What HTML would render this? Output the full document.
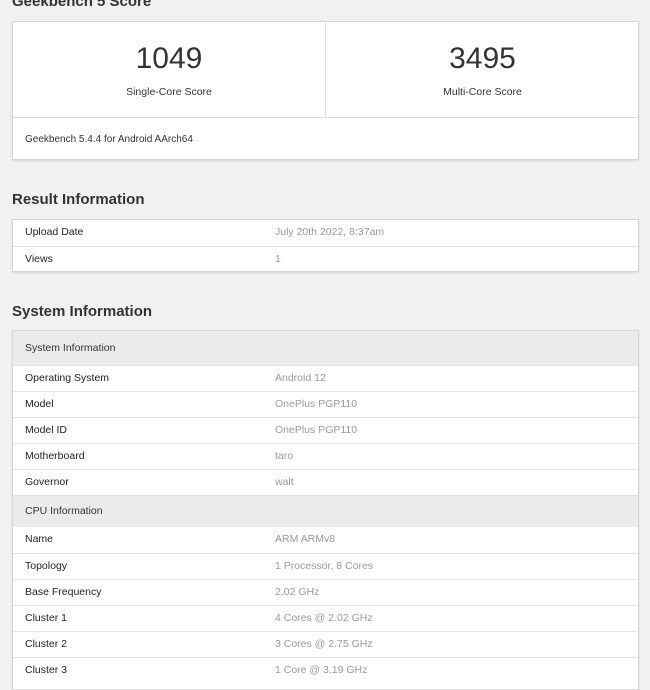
<!DOCTYPE html>
<html><head><meta charset="utf-8"><style>
*{margin:0;padding:0;box-sizing:border-box}
body{width:650px;height:675px;overflow:hidden;background:#f1f1f1;font-family:"Liberation Sans",sans-serif;color:#333;position:relative}
h2{position:absolute;left:12px;font-size:15px;font-weight:bold;color:#333}
.card{position:absolute;left:12px;width:627px;background:#fff;border:1px solid #d6d6d6;box-shadow:0 1px 2px rgba(0,0,0,.12)}
.row{height:26px;border-top:1px solid #e4e4e4;position:relative;font-size:10.5px;line-height:25px}
.row:first-child{border-top:none}
.row .l{position:absolute;left:12px;color:#222}
.row .v{position:absolute;left:262px;color:#999}
.hd{background:#ebebeb;border-top:1px solid #e0e0e0;font-size:10.5px;padding-left:12px;color:#333}
</style></head><body>
<h2 style="top:-7px">Geekbench 5 Score</h2>
<div class="card" style="top:21px;height:139px">
 <div style="position:absolute;left:0;top:0;width:313px;height:95px;border-right:1px solid #ddd;text-align:center">
  <div style="font-size:30px;margin-top:20px;color:#333">1049</div>
  <div style="font-size:10.5px;margin-top:10px">Single-Core Score</div>
 </div>
 <div style="position:absolute;left:313px;top:0;width:313px;height:95px;text-align:center">
  <div style="font-size:30px;margin-top:20px;color:#333">3495</div>
  <div style="font-size:10.5px;margin-top:10px">Multi-Core Score</div>
 </div>
 <div style="position:absolute;left:0;right:0;top:95px;border-top:1px solid #ddd;font-size:10px;padding:16px 0 0 12px">Geekbench 5.4.4 for Android AArch64</div>
</div>
<h2 style="top:191px">Result Information</h2>
<div class="card" style="top:219px;height:53px">
 <div class="row"><span class="l">Upload Date</span><span class="v">July 20th 2022, 8:37am</span></div>
 <div class="row"><span class="l">Views</span><span class="v">1</span></div>
</div>
<h2 style="top:303px">System Information</h2>
<div class="card" style="top:330px;height:360px">
 <div class="hd" style="height:34px;line-height:34px;border-top:none">System Information</div>
 <div class="row"><span class="l">Operating System</span><span class="v">Android 12</span></div>
 <div class="row"><span class="l">Model</span><span class="v">OnePlus PGP110</span></div>
 <div class="row"><span class="l">Model ID</span><span class="v">OnePlus PGP110</span></div>
 <div class="row"><span class="l">Motherboard</span><span class="v">taro</span></div>
 <div class="row"><span class="l">Governor</span><span class="v">walt</span></div>
 <div class="hd" style="height:32px;line-height:31px">CPU Information</div>
 <div class="row" style="border-top:none"><span class="l">Name</span><span class="v">ARM ARMv8</span></div>
 <div class="row"><span class="l">Topology</span><span class="v">1 Processor, 8 Cores</span></div>
 <div class="row"><span class="l">Base Frequency</span><span class="v">2.02 GHz</span></div>
 <div class="row"><span class="l">Cluster 1</span><span class="v">4 Cores @ 2.02 GHz</span></div>
 <div class="row"><span class="l">Cluster 2</span><span class="v">3 Cores @ 2.75 GHz</span></div>
 <div class="row"><span class="l">Cluster 3</span><span class="v">1 Core @ 3.19 GHz</span></div>
</div>
</body></html>
